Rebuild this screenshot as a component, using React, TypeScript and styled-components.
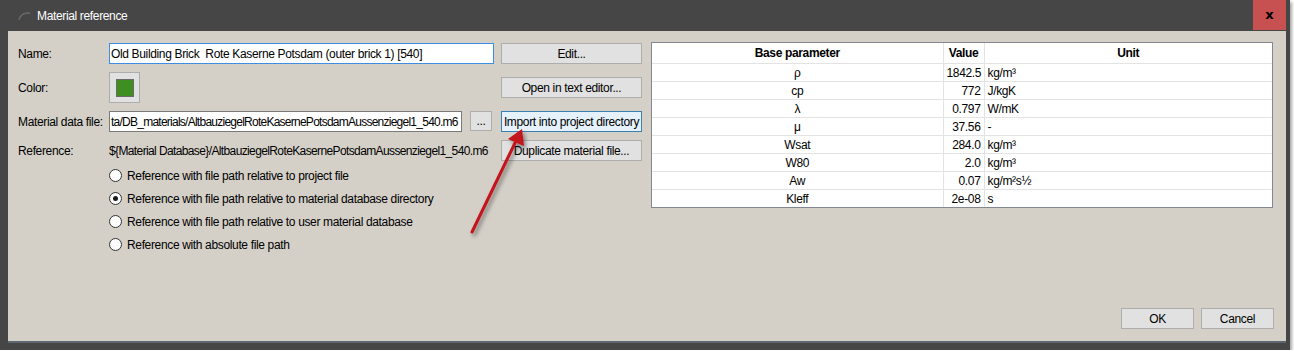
import styled, { createGlobalStyle } from "styled-components";

const GlobalStyle = createGlobalStyle`
    body {
        margin: 0;
        background: #ffffff;
        font-family: "Liberation Sans", Arial, sans-serif;
        font-size: 12px;
        letter-spacing: -0.35px;
        color: #000000;
    }
`

const PARAMS = [
    {name: "ρ", value: "1842.5", unit: "kg/m³"},
    {name: "cp", value: "772", unit: "J/kgK"},
    {name: "λ", value: "0.797", unit: "W/mK"},
    {name: "μ", value: "37.56", unit: "-"},
    {name: "Wsat", value: "284.0", unit: "kg/m³"},
    {name: "W80", value: "2.0", unit: "kg/m³"},
    {name: "Aw", value: "0.07", unit: "kg/m²s½"},
    {name: "Kleff", value: "2e-08", unit: "s"},
]

const RADIOS = [
    {label: "Reference with file path relative to project file", checked: false},
    {label: "Reference with file path relative to material database directory", checked: true},
    {label: "Reference with file path relative to user material database", checked: false},
    {label: "Reference with absolute file path", checked: false},
]

const App = () => {
    return (
        <>
            <GlobalStyle/>
            <StyledWindow>
                <StyledTitleBar>
                    <StyledTitleIcon viewBox="0 0 14 10">
                        <path d="M1 9 C3 3 8 1 13 2" stroke="#6a6a6a" strokeWidth="1.6" fill="none"/>
                    </StyledTitleIcon>
                    <StyledTitle>Material reference</StyledTitle>
                    <StyledCloseBtn>x</StyledCloseBtn>
                </StyledTitleBar>

                <StyledBody>
                    <StyledTop>
                        <StyledForm>
                            <StyledLabel>Name:</StyledLabel>
                            <StyledField>
                                <StyledInput $focused={true}>Old Building Brick&nbsp; Rote Kaserne Potsdam (outer brick 1) [540]</StyledInput>
                            </StyledField>
                            <StyledButton>Edit...</StyledButton>

                            <StyledLabel>Color:</StyledLabel>
                            <StyledField>
                                <StyledColorBtn>
                                    <StyledSwatch/>
                                </StyledColorBtn>
                            </StyledField>
                            <StyledButton>Open in text editor...</StyledButton>

                            <StyledLabel>Material data file:</StyledLabel>
                            <StyledField>
                                <StyledFileRow>
                                    <StyledInput $focused={false} $path={true}>ta/DB_materials/AltbauziegelRoteKasernePotsdamAussenziegel1_540.m6</StyledInput>
                                    <StyledSmallBtn>...</StyledSmallBtn>
                                </StyledFileRow>
                            </StyledField>
                            <StyledButton $highlight={true}>Import into project directory</StyledButton>

                            <StyledLabel>Reference:</StyledLabel>
                            <StyledField>
                                <StyledRefText>{"${Material Database}/AltbauziegelRoteKasernePotsdamAussenziegel1_540.m6"}</StyledRefText>
                            </StyledField>
                            <StyledButton>Duplicate material file...</StyledButton>

                            <StyledRadioGroup>
                                {RADIOS.map((r) => (
                                    <StyledRadioRow key={r.label}>
                                        <StyledRadio $checked={r.checked}/>
                                        <span>{r.label}</span>
                                    </StyledRadioRow>
                                ))}
                            </StyledRadioGroup>
                        </StyledForm>

                        <StyledTableBox>
                            <StyledTable>
                                <colgroup>
                                    <col style={{width: 291}}/>
                                    <col style={{width: 41}}/>
                                    <col/>
                                </colgroup>
                                <thead>
                                <tr>
                                    <StyledTh>Base parameter</StyledTh>
                                    <StyledTh>Value</StyledTh>
                                    <StyledTh>Unit</StyledTh>
                                </tr>
                                </thead>
                                <tbody>
                                {PARAMS.map((p) => (
                                    <tr key={p.name}>
                                        <StyledTd $align="center">{p.name}</StyledTd>
                                        <StyledTd $align="right">{p.value}</StyledTd>
                                        <StyledTd $align="left">{p.unit}</StyledTd>
                                    </tr>
                                ))}
                                </tbody>
                            </StyledTable>
                        </StyledTableBox>
                    </StyledTop>

                    <StyledFooter>
                        <StyledFooterBtn>OK</StyledFooterBtn>
                        <StyledFooterBtn>Cancel</StyledFooterBtn>
                    </StyledFooter>
                </StyledBody>

                <StyledArrow viewBox="0 0 1294 352" width="1294" height="352">
                    <defs>
                        <filter id="arrowShadow" x="-20%" y="-20%" width="140%" height="140%">
                            <feDropShadow dx="2" dy="3" stdDeviation="2" floodColor="#000" floodOpacity="0.45"/>
                        </filter>
                    </defs>
                    <g filter="url(#arrowShadow)">
                        <line x1="472" y1="232" x2="515" y2="143" stroke="#c3121a" strokeWidth="3" strokeLinecap="round"/>
                        <polygon points="522,129 524,146 508,139" fill="#c3121a"/>
                    </g>
                </StyledArrow>
            </StyledWindow>
        </>
    )
}

export default App

const StyledWindow = styled.div`
    position: relative;
    display: flex;
    flex-direction: column;
    width: 1290px;
    height: 350px;
    box-sizing: border-box;
    padding: 0 4px 7px 8px;
    background: #464646;
    box-shadow: 2px 2px 3px rgba(0, 0, 0, 0.35);
`

const StyledTitleBar = styled.div`
    display: flex;
    align-items: center;
    height: 31px;
    flex-shrink: 0;
`

const StyledTitleIcon = styled.svg`
    width: 13px;
    height: 10px;
    margin: 0 6px 0 10px;
`

const StyledTitle = styled.div`
    flex: 1;
    color: #ffffff;
    font-size: 12px;
    padding-top: 1px;
`

const StyledCloseBtn = styled.div`
    align-self: flex-start;
    display: flex;
    align-items: center;
    justify-content: center;
    width: 33px;
    height: 30px;
    background: #c75050;
    color: #000000;
    font-family: "DejaVu Sans", sans-serif;
    font-weight: bold;
    font-size: 13px;
    letter-spacing: 0;
    padding-bottom: 2px;
    box-sizing: border-box;
`

const StyledBody = styled.div`
    flex: 1;
    display: flex;
    flex-direction: column;
    background: #d4d0c8;
    padding: 12px 12px 12px 10px;
    border-bottom: 2px solid #5d6670;
`

const StyledTop = styled.div`
    display: flex;
    align-items: flex-start;
    gap: 9px;
`

const StyledForm = styled.div`
    display: grid;
    grid-template-columns: 91px 392px 141px;
    grid-template-rows: 21px 31px 21px 21px auto;
    row-gap: 8px;
    align-items: center;
`

const StyledLabel = styled.div`
    white-space: nowrap;
`

const StyledField = styled.div`
    padding-right: 7px;
    display: flex;
    align-items: center;
    min-width: 0;
`

const StyledInput = styled.div<{ $focused: boolean, $path?: boolean }>`
    flex: 1;
    min-width: 0;
    height: 21px;
    box-sizing: border-box;
    display: flex;
    align-items: center;
    padding: 0 1px;
    background: #ffffff;
    border: 1px solid ${(props) => props.$focused ? "#3d8ee0" : "#7a7a7a"};
    white-space: nowrap;
    overflow: hidden;
    letter-spacing: ${(props) => props.$path ? "-0.75px" : "-0.35px"};
`

const StyledFileRow = styled.div`
    flex: 1;
    min-width: 0;
    display: flex;
    gap: 8px;
    padding-right: 2px;
`

const StyledSmallBtn = styled.div`
    flex-shrink: 0;
    width: 22px;
    height: 20px;
    box-sizing: border-box;
    display: flex;
    align-items: center;
    justify-content: center;
    background: #e1e1e1;
    border: 1px solid #adadad;
`

const StyledColorBtn = styled.div`
    width: 31px;
    height: 31px;
    box-sizing: border-box;
    display: flex;
    align-items: center;
    justify-content: center;
    background: #e1e1e1;
    border: 1px solid #adadad;
`

const StyledSwatch = styled.div`
    width: 18px;
    height: 18px;
    box-sizing: border-box;
    background: #3f8e21;
    border: 1px solid #6a6a6a;
`

const StyledRefText = styled.div`
    white-space: nowrap;
    letter-spacing: -0.62px;
`

const StyledButton = styled.div<{ $highlight?: boolean }>`
    height: 21px;
    box-sizing: border-box;
    display: flex;
    align-items: center;
    justify-content: center;
    white-space: nowrap;
    background: ${(props) => props.$highlight ? "#e5f1fb" : "#e1e1e1"};
    border: 1px solid ${(props) => props.$highlight ? "#3c7fb1" : "#adadad"};
`

const StyledRadioGroup = styled.div`
    grid-column: 2 / 4;
    display: flex;
    flex-direction: column;
    margin-top: -5px;
`

const StyledRadioRow = styled.div`
    display: flex;
    align-items: center;
    gap: 5px;
    height: 23px;
`

const StyledRadio = styled.div<{ $checked: boolean }>`
    position: relative;
    width: 13px;
    height: 13px;
    box-sizing: border-box;
    border-radius: 50%;
    background: #ffffff;
    border: 1px solid #333333;

    &::after {
        content: "";
        display: ${(props) => props.$checked ? "block" : "none"};
        position: absolute;
        left: 3px;
        top: 3px;
        width: 5px;
        height: 5px;
        border-radius: 50%;
        background: #1a1a1a;
    }
`

const StyledTableBox = styled.div`
    width: 622px;
    margin-top: -1px;
    box-sizing: border-box;
    border: 1px solid #828790;
    background: #ffffff;
`

const StyledTable = styled.table`
    width: 100%;
    table-layout: fixed;
    border-collapse: collapse;
    font-size: 12px;
`

const StyledTh = styled.th`
    height: 20px;
    padding: 0 3px;
    font-weight: bold;
    text-align: center;
    background: #ffffff;
    border-right: 1px solid #e3e3e3;
    border-bottom: 1px solid #e3e3e3;

    &:last-child {
        border-right: none;
    }
`

const StyledTd = styled.td<{ $align: string }>`
    height: 17px;
    padding: 0 3px;
    text-align: ${(props) => props.$align};
    white-space: nowrap;
    overflow: hidden;
    border-right: 1px solid #e3e3e3;
    border-bottom: 1px solid #e3e3e3;

    &:last-child {
        border-right: none;
    }

    tr:last-child > & {
        border-bottom: none;
    }
`

const StyledFooter = styled.div`
    margin-top: auto;
    display: flex;
    justify-content: flex-end;
    gap: 7px;
`

const StyledFooterBtn = styled.div`
    width: 73px;
    height: 21px;
    box-sizing: border-box;
    display: flex;
    align-items: center;
    justify-content: center;
    background: #e1e1e1;
    border: 1px solid #adadad;
`

const StyledArrow = styled.svg`
    position: absolute;
    left: 0;
    top: 0;
    pointer-events: none;
`
